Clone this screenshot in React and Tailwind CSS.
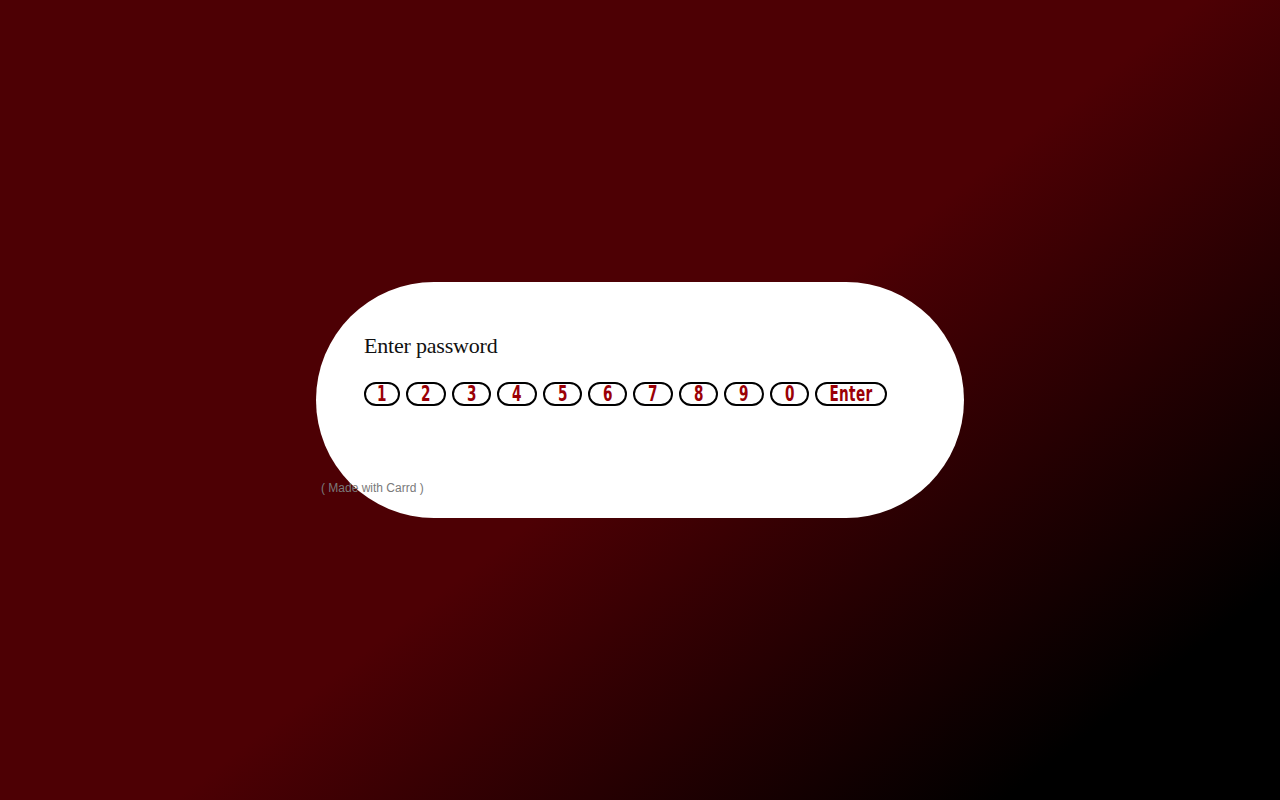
const keys = [
  { label: '1', w: 'w-[36px]' },
  { label: '2', w: 'w-[40px]' },
  { label: '3', w: 'w-[39px]' },
  { label: '4', w: 'w-[40px]' },
  { label: '5', w: 'w-[39px]' },
  { label: '6', w: 'w-[39px]' },
  { label: '7', w: 'w-[40px]' },
  { label: '8', w: 'w-[39px]' },
  { label: '9', w: 'w-[40px]' },
  { label: '0', w: 'w-[39px]' },
  { label: 'Enter', w: 'w-[72px]' },
];

export default function App() {
  return (
    <div className="min-h-screen w-full flex items-center justify-center bg-[linear-gradient(142deg,#4d0004_0%,#4d0004_52%,#000000_88%)]">
      <div className="relative w-[648px] h-[236px] bg-white rounded-full pl-[48px] pt-[50px]">
        <p className="text-[22px] leading-[28px] text-[#111] font-['Liberation_Serif',serif] tracking-[-0.2px]">
          Enter password
        </p>
        <div className="flex gap-[6px] mt-[22px]">
          {keys.map((k) => (
            <button
              key={k.label}
              className={`${k.w} h-[24px] border-2 border-black rounded-full flex items-center justify-center overflow-hidden`}
            >
              <span className="inline-block scale-x-[0.72] text-[#9b0006] text-[21px] leading-none font-bold tracking-[0.5px] font-['DejaVu_Sans_Condensed','DejaVu_Sans',sans-serif]">
                {k.label}
              </span>
            </button>
          ))}
        </div>
        <span className="absolute left-[5px] bottom-[21px] text-[12px] text-[#7a7a7a] font-['Liberation_Sans',sans-serif]">
          ( Made with Carrd )
        </span>
      </div>
    </div>
  );
}
